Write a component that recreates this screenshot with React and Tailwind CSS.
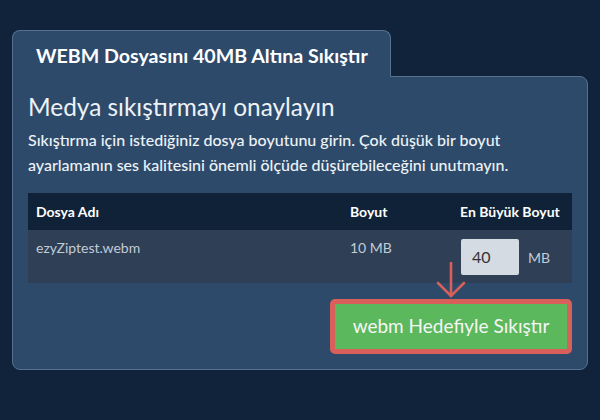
export default function App() {
  return (
    <div
      className="min-h-[420px] w-[600px] bg-[#10233a] pl-[12px] pt-[30px]"
      style={{ fontFamily: "Lato, 'Open Sans', sans-serif" }}
    >
      {/* Tab */}
      <div className="relative z-10 -mb-px w-[379px] rounded-t-[8px] border-x border-t border-[#55718f] bg-[#2d4a6b] pl-[23px] pt-[13px] pb-[9px]">
        <h1 className="text-[19.6px] font-bold leading-[24px] text-white">
          WEBM Dosyasını 40MB Altına Sıkıştır
        </h1>
      </div>

      {/* Panel */}
      <div className="relative w-[576px] rounded-b-[8px] rounded-tr-[8px] border border-[#55718f] bg-[#2d4a6b] px-[15px] pt-[16px] pb-[15px]">
        <h2 className="text-[24.4px] leading-[28px] text-[#eef2f6]">
          Medya sıkıştırmayı onaylayın
        </h2>
        <p className="mt-[6px] text-[16px] font-medium leading-[25px] text-[#eef2f6]">
          Sıkıştırma için istediğiniz dosya boyutunu girin. Çok düşük bir boyut
          ayarlamanın ses kalitesini önemli ölçüde düşürebileceğini unutmayın.
        </p>

        {/* Table */}
        <div className="mt-[16px]">
          <div className="grid h-[37px] grid-cols-[314px_110px_1fr] items-center bg-[#0f2237] text-[14px] font-bold text-white">
            <div className="pl-2">Dosya Adı</div>
            <div className="pl-2">Boyut</div>
            <div className="pl-2">En Büyük Boyut</div>
          </div>
          <div className="grid grid-cols-[314px_110px_1fr] bg-[#2e3f56] pb-[8px] pt-[9px] text-[14px] text-[#c3cbd5]">
            <div className="pl-2 leading-[17px]">ezyZiptest.webm</div>
            <div className="pl-2 leading-[17px]">10 MB</div>
            <div className="flex items-center gap-[9px] pl-[9px]">
              <div className="flex h-[36px] w-[58px] items-center rounded-[2px] bg-[#d5dbe3] pl-[11px] text-[16px] text-[#333]">
                40
              </div>
              <span>MB</span>
            </div>
          </div>
        </div>

        {/* Button */}
        <div className="mt-[16px] flex justify-end">
          <button className="flex h-[55px] w-[242px] items-center justify-center rounded-[5px] border-[5px] border-[#d9605a] bg-[#5cb85c] text-[19px] text-[#f4f6f4]">
            webm Hedefiyle Sıkıştır
          </button>
        </div>

        {/* Arrow annotation */}
        <svg
          className="absolute left-[423px] top-[185px]"
          width="30"
          height="36"
          viewBox="0 0 30 36"
          fill="none"
          stroke="#d9605a"
          strokeWidth="2.6"
          strokeLinecap="round"
        >
          <path d="M15 1 V34" />
          <path d="M2 21 L15 34 L28 21" />
        </svg>
      </div>
    </div>
  );
}
